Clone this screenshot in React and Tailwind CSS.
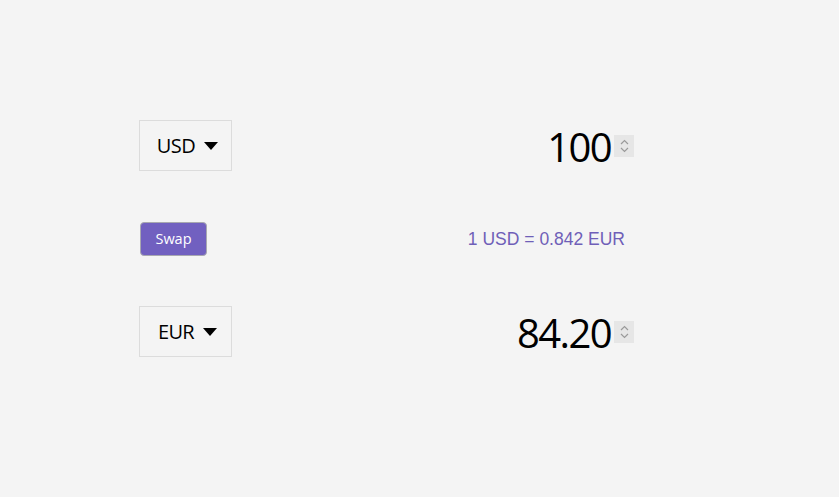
import { useState } from 'react';

// ─── Currency converter: two select/amount rows with a swap bar between ─────

const RATE = 0.842;

function CurrencySelect({ code }) {
  return (
    <div className="flex h-[51px] w-[93px] items-center justify-center gap-[9px] border border-[#dcdcdc] bg-[#f4f4f4] pl-[4px] text-[20px] tracking-[-0.6px] text-black">
      <span>{code}</span>
      <svg width="14" height="8" viewBox="0 0 14 8" aria-hidden="true">
        <path d="M0 0h14L7 8z" fill="#000" />
      </svg>
    </div>
  );
}

function Amount({ value }) {
  return (
    <div className="flex items-center">
      <span className="mt-[2px] text-[40px] leading-none tracking-[-1.6px] text-black">{value}</span>
      <div className="ml-[3px] flex h-[22px] w-[20px] flex-col items-center justify-center bg-[#e6e6e6]">
        <svg width="9" height="16" viewBox="0 0 9 16" aria-hidden="true">
          <path d="M1 6l3.5-3.5L8 6M1 10l3.5 3.5L8 10" fill="none" stroke="#9a9a9a" strokeWidth="1.2" />
        </svg>
      </div>
    </div>
  );
}

export default function App() {
  const [from, setFrom] = useState('USD');
  const to = from === 'USD' ? 'EUR' : 'USD';
  const amount = 100;
  const rate = from === 'USD' ? RATE : 1 / RATE;

  return (
    <div
      className="h-[497px] w-full bg-[#f4f4f4] pl-[139px] pt-[120px]"
      style={{ fontFamily: '"Open Sans", "Noto Sans", sans-serif' }}
    >
      <div className="flex w-[495px] flex-col">
        <div className="flex items-center justify-between">
          <CurrencySelect code={from} />
          <Amount value={amount} />
        </div>

        <div className="mt-[51px] flex items-center justify-between pr-[9px]">
          <button
            onClick={() => setFrom(to)}
            className="ml-[1px] flex h-[34px] w-[67px] items-center justify-center rounded-[4px] border-[1.5px] border-[#a8a8b0] bg-[#7160c0] text-[14.5px] text-white"
          >
            Swap
          </button>
          <span
            className="text-[17.5px] text-[#6f5fb8]"
            style={{ fontFamily: '"Liberation Sans", Arial, sans-serif' }}
          >
            1 {from} = {rate.toFixed(3)} {to}
          </span>
        </div>

        <div className="mt-[50px] flex items-center justify-between">
          <CurrencySelect code={to} />
          <Amount value={(amount * rate).toFixed(2)} />
        </div>
      </div>
    </div>
  );
}
